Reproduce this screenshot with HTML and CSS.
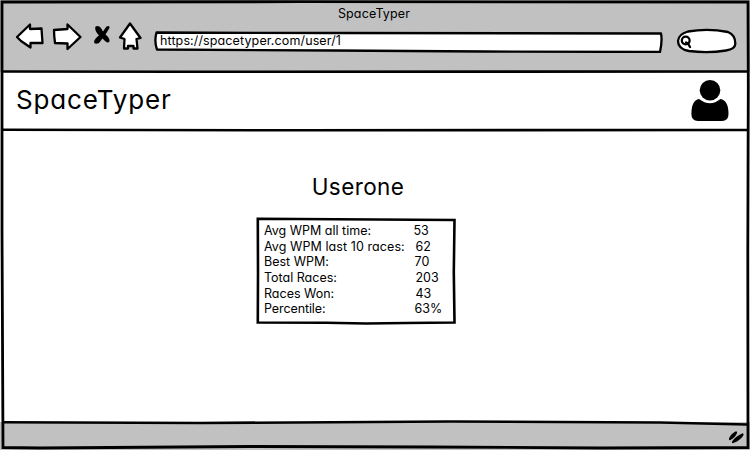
FILE: index.html
```html
<!DOCTYPE html>
<html lang="en">
<head>
<meta charset="utf-8">
<title>SpaceTyper</title>
<link rel="stylesheet" href="styles.css">
</head>
<body>
<div class="window">
  <header class="chrome">
    <div class="title">SpaceTyper</div>
    <div class="toolbar">
      <svg class="nav" width="128" height="30" viewBox="0 0.5 128 30">
        <g class="ink paper">
          <path d="M2 15.500L15 3V7.500L26.500 7L27.500 21.500H15.500V26L6 19.500Z"/>
          <path d="M39 8.500L52.500 7.500V3L65.500 15.500L52.500 27.500V22L40 21.500Q39 14 39 8.500Z"/>
          <path d="M105 16L115 2L125.500 16.500L121.500 17.500L122.500 27H118.500V24.500H113V27H109L109.500 17.500Z"/>
        </g>
        <path class="cross" d="M80.500 5Q83.500 3.500 86 6.500L88 10L91.500 5Q95 3.500 94.500 6.500L90.500 13Q95 16.500 94.500 20Q92.500 22.500 89.500 19L87.500 17L84 21.500Q79.500 23.500 79 20.500Q79.500 17 84 14Q79 8.500 80.500 5Z"/>
      </svg>
      <div class="address">
        <svg class="outline" width="512" height="24" viewBox="0 0 512 24"><path class="ink paper" d="M3.500 3.500L180 4L508 4.500Q509.500 12 507 23L330 22.500L180 21.500L4 20.500Q1 12 3.500 3.500Z"/></svg>
        <span class="url">https://spacetyper.com/user/1</span>
      </div>
      <svg class="search" width="62" height="28" viewBox="0 0 62 28">
        <path class="ink paper" d="M12 4.500Q32 1 52 5Q59.500 8 59.300 17Q59 22 50 23.500Q32 26.500 13 24Q2 22 2 14Q2.500 7 12 4.500Z"/>
        <circle class="ink" cx="9.700" cy="13.500" r="3.900"/><path class="ink" d="M10 15.500L12 16.500L14 20"/>
      </svg>
    </div>
  </header>
  <div class="appbar">
    <h1>SpaceTyper</h1>
    <svg class="user" width="38" height="42" viewBox="0 0 38 42"><circle cx="19" cy="10.300" r="10.300"/><path d="M8 19Q19 27.500 29.500 19Q37.500 20.500 37.500 34Q37.500 41 31 41H7Q.4 41 .4 34Q.4 20.500 8 19Z"/></svg>
  </div>
  <main class="content">
    <h2>Userone</h2>
    <section class="card">
      <svg class="outline" width="200" height="108" viewBox="0 0 200 108"><path class="box" d="M1.800 1.800L80 2.200L198.500 3L197.800 55L198.500 105.500L150 106L110 106.500L70 105.800L1.800 105.500L2 55Z"/></svg>
      <dl class="stats">
        <dt>Avg WPM all time:</dt><dd>53</dd>
        <dt class="wide">Avg WPM last 10 races:</dt><dd class="in2">62</dd>
        <dt>Best WPM:</dt><dd class="in1">70</dd>
        <dt>Total Races:</dt><dd class="in2">203</dd>
        <dt>Races Won:</dt><dd class="in2">43</dd>
        <dt class="narrow">Percentile:</dt><dd class="in1">63%</dd>
      </dl>
    </section>
  </main>
  <footer class="status">
    <svg width="17" height="14" viewBox="0 0 17 14"><path class="grip" d="M2 9Q3.500 5 8 2.500Q6.500 6.500 2 9ZM5 12Q8 7.500 14.500 4.500Q12.500 9 5 12Z"/></svg>
  </footer>
  <svg class="frame" width="750" height="450" viewBox="0 0 750 450">
    <path class="edge" d="M2 2L300 1.700L748 2L748.300 85L747.800 250L748 447.500L600 448L430 447L250 446.500L40 448L3 447.500L2 230L2 90Z"/>
    <path class="rule" d="M2 71.500L180 71.800L747 71.500M2 129.800L300 130.300L747 130M2 422.200L200 423L450 421.500L660 422.500L747 424.500"/>
  </svg>
</div>
</body>
</html>
```
FILE: styles.css
```css
body {
  margin: 0;
  background: #fff;
  color: #000;
  font-family: Inter, "Liberation Sans", sans-serif;
  font-feature-settings: "cv11", "calt" 0;
}

.window {
  position: relative;
  display: flex;
  flex-direction: column;
  width: 750px;
  height: 450px;
  overflow: hidden;
}

.chrome {
  box-sizing: border-box;
  height: 72px;
  padding: 5px 0 0 15px;
  background: #c1c1c1;
}

.title {
  width: 718px;
  height: 17px;
  font-size: 12.5px;
  line-height: 17px;
  letter-spacing: 0.15px;
  text-align: center;
}

.toolbar { display: flex; }

.address {
  position: relative;
  width: 512px;
  height: 24px;
  margin: 7px 11px 0 10px;
}

.outline {
  position: absolute;
  top: 0;
  left: 0;
}

.url {
  position: relative;
  display: block;
  padding-left: 7px;
  font-size: 12.5px;
  line-height: 24px;
  letter-spacing: 0.12px;
}

.search { margin-top: 5px; }

.ink {
  fill: none;
  stroke: #000;
  stroke-width: 2.3;
  stroke-linejoin: round;
  stroke-linecap: round;
}

.paper { fill: #fff; }

.appbar {
  box-sizing: border-box;
  display: flex;
  justify-content: space-between;
  height: 58px;
  padding: 8px 21px 0 16px;
}

h1, h2 { margin: 0; font-weight: 400; }

h1 {
  font-size: 26px;
  line-height: 40px;
  letter-spacing: 0.85px;
}

.content { flex: 1; }

h2 {
  width: 716px;
  padding-top: 42px;
  font-size: 22.5px;
  line-height: 30px;
  letter-spacing: 0.4px;
  text-align: center;
}

.card {
  position: relative;
  width: 200px;
  height: 108px;
  margin: 15px 0 0 256px;
}

.stats {
  position: relative;
  display: grid;
  grid-template-columns: 149.5px 42px;
  grid-auto-rows: 15.65px;
  margin: 0;
  padding: 6px 0 0 8px;
  font-size: 12.5px;
  line-height: 15.65px;
  white-space: nowrap;
}

.wide { letter-spacing: 0.08px; }
.narrow { letter-spacing: -0.1px; }

dd { margin: 0; }
.in1 { padding-left: 1px; }
.in2 { padding-left: 2px; }

.box { fill: #fff; stroke: #000; stroke-width: 2.6; }

.status {
  box-sizing: border-box;
  display: flex;
  justify-content: flex-end;
  height: 28px;
  padding: 8px 5px 0 0;
  background: #c1c1c1;
}

.grip { stroke: #000; stroke-width: 2.2; stroke-linejoin: round; }

.frame { position: absolute; top: 0; left: 0; }
.edge { fill: none; stroke: #000; stroke-width: 2.8; }
.rule { fill: none; stroke: #000; stroke-width: 2.6; }
```
